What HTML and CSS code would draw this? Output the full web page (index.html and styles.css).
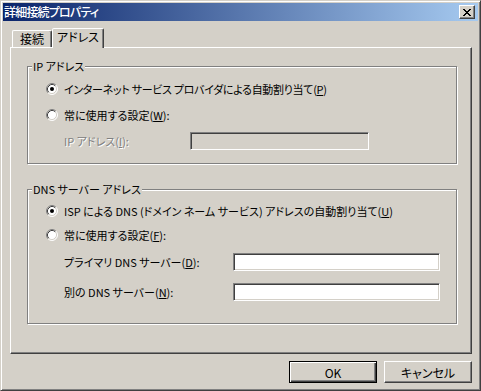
FILE: index.html
```html
<!DOCTYPE html>
<html lang="ja">
<head>
    <meta charset="UTF-8">
    <title>詳細接続プロパティ</title>
    <link rel="stylesheet" href="styles.css">
</head>
<body>
    <div class="window">
        <!-- Title bar -->
        <div class="titlebar">
            <span class="title">詳細接続プロパティ</span>
            <span class="close">
                <svg width="8" height="7" viewBox="0 0 8 7"><path d="M0 0h2v1H0zM6 0h2v1H6zM1 1h2v1H1zM5 1h2v1H5zM2 2h4v1H2zM3 3h2v1H3zM2 4h4v1H2zM1 5h2v1H1zM5 5h2v1H5zM0 6h2v1H0zM6 6h2v1H6z" fill="#000"/></svg>
            </span>
        </div>

        <!-- Tabs -->
        <div class="tabs">
            <div class="tab">接続</div>
            <div class="tab active">アドレス</div>
        </div>

        <div class="panel">
            <!-- IP address group -->
            <div class="group ip">
                <span class="legend">IP アドレス</span>
                <div class="row">
                    <svg class="radio" width="12" height="12" viewBox="0 0 12 12">
                        <circle cx="6" cy="6" r="5" fill="#fff"/>
                        <path d="M2.11 9.89A5.5 5.5 0 0 1 9.89 2.11" stroke="#808080" fill="none"/>
                        <path d="M9.89 2.11A5.5 5.5 0 0 1 2.11 9.89" stroke="#fff" fill="none"/>
                        <path d="M2.82 9.18A4.5 4.5 0 0 1 9.18 2.82" stroke="#404040" fill="none"/>
                        <path d="M9.18 2.82A4.5 4.5 0 0 1 2.82 9.18" stroke="#d4d0c8" fill="none"/>
                        <circle cx="6" cy="6" r="2" fill="#000"/>
                    </svg>
                    <span class="tight">インターネット サービス プロバイダによる自動割り当て(<u>P</u>)</span>
                </div>
                <div class="row">
                    <svg class="radio" width="12" height="12" viewBox="0 0 12 12">
                        <circle cx="6" cy="6" r="5" fill="#fff"/>
                        <path d="M2.11 9.89A5.5 5.5 0 0 1 9.89 2.11" stroke="#808080" fill="none"/>
                        <path d="M9.89 2.11A5.5 5.5 0 0 1 2.11 9.89" stroke="#fff" fill="none"/>
                        <path d="M2.82 9.18A4.5 4.5 0 0 1 9.18 2.82" stroke="#404040" fill="none"/>
                        <path d="M9.18 2.82A4.5 4.5 0 0 1 2.82 9.18" stroke="#d4d0c8" fill="none"/>
                    </svg>
                    <span>常に使用する設定(<u>W</u>):</span>
                </div>
                <div class="row field ip-field">
                    <span class="label disabled">IP アドレス(<u>I</u>):</span>
                    <span class="input off"></span>
                </div>
            </div>

            <!-- DNS group -->
            <div class="group dns">
                <span class="legend">DNS サーバー アドレス</span>
                <div class="row">
                    <svg class="radio" width="12" height="12" viewBox="0 0 12 12">
                        <circle cx="6" cy="6" r="5" fill="#fff"/>
                        <path d="M2.11 9.89A5.5 5.5 0 0 1 9.89 2.11" stroke="#808080" fill="none"/>
                        <path d="M9.89 2.11A5.5 5.5 0 0 1 2.11 9.89" stroke="#fff" fill="none"/>
                        <path d="M2.82 9.18A4.5 4.5 0 0 1 9.18 2.82" stroke="#404040" fill="none"/>
                        <path d="M9.18 2.82A4.5 4.5 0 0 1 2.82 9.18" stroke="#d4d0c8" fill="none"/>
                        <circle cx="6" cy="6" r="2" fill="#000"/>
                    </svg>
                    <span>ISP による DNS (ドメイン ネーム サービス) アドレスの自動割り当て(<u>U</u>)</span>
                </div>
                <div class="row">
                    <svg class="radio" width="12" height="12" viewBox="0 0 12 12">
                        <circle cx="6" cy="6" r="5" fill="#fff"/>
                        <path d="M2.11 9.89A5.5 5.5 0 0 1 9.89 2.11" stroke="#808080" fill="none"/>
                        <path d="M9.89 2.11A5.5 5.5 0 0 1 2.11 9.89" stroke="#fff" fill="none"/>
                        <path d="M2.82 9.18A4.5 4.5 0 0 1 9.18 2.82" stroke="#404040" fill="none"/>
                        <path d="M9.18 2.82A4.5 4.5 0 0 1 2.82 9.18" stroke="#d4d0c8" fill="none"/>
                    </svg>
                    <span>常に使用する設定(<u>F</u>):</span>
                </div>
                <div class="row field dns-field first">
                    <span class="label">プライマリ DNS サーバー(<u>D</u>):</span>
                    <span class="input"></span>
                </div>
                <div class="row field dns-field second">
                    <span class="label">別の DNS サーバー(<u>N</u>):</span>
                    <span class="input"></span>
                </div>
            </div>
        </div>

        <!-- Dialog buttons -->
        <div class="buttons">
            <button class="btn default">OK</button>
            <button class="btn">キャンセル</button>
        </div>
    </div>
</body>
</html>
```

FILE: styles.css
```css
/* Win2000 style dialog */
* {
    box-sizing: border-box;
}

body {
    margin: 0;
    background-color: #d4d0c8;
    font-family: "Noto Sans CJK JP", sans-serif;
    font-size: 11px;
    font-feature-settings: "palt";
    color: #000;
}

.window {
    width: 481px;
    height: 391px;
    display: flex;
    flex-direction: column;
    padding: 2px;
    border: 1px solid;
    border-color: #d4d0c8 #404040 #404040 #d4d0c8;
    box-shadow: inset 1px 1px 0 #fff, inset -1px -1px 0 #808080;
}

/* Title bar */
.titlebar {
    height: 18px;
    display: flex;
    align-items: center;
    justify-content: space-between;
    padding: 0 3px 0 1px;
    background: linear-gradient(to right, #0a246a, #a6caf0);
    color: white;
    line-height: 18px;
}

.title {
    font-size: 12px;
    font-weight: 500;
    letter-spacing: -0.8px;
}

.close {
    width: 16px;
    height: 14px;
    display: flex;
    align-items: center;
    justify-content: center;
    background-color: #d4d0c8;
    border: 1px solid;
    border-color: #fff #404040 #404040 #fff;
    box-shadow: inset -1px -1px 0 #808080;
}

/* Tabs */
.tabs {
    height: 19px;
    margin-top: 7px;
    padding-left: 9px;
    display: flex;
    align-items: flex-end;
}

.tab {
    width: 40px;
    height: 17px;
    font-size: 12px;
    text-align: center;
    line-height: 15px;
    border: 1px solid;
    border-bottom: none;
    border-color: #fff #404040 transparent #fff;
    border-radius: 2px 2px 0 0;
    box-shadow: inset -1px 0 0 #808080;
}

.tab.active {
    width: 52px;
    height: 20px;
    margin-bottom: -1px;
    position: relative;
    background-color: #d4d0c8;
    line-height: 16px;
}

/* Tab page */
.panel {
    height: 307px;
    margin: 0 6px 0 7px;
    padding: 18px 0 0 16px;
    border: 1px solid;
    border-color: #fff #404040 #404040 #fff;
    box-shadow: inset -1px -1px 0 #808080;
}

.group {
    position: relative;
    width: 430px;
    padding-top: 9px;
    border: 1px solid #808080;
    box-shadow: inset 1px 1px 0 #fff, 1px 1px 0 #fff;
}

.group.ip {
    height: 98px;
}

.group.dns {
    height: 135px;
    margin-top: 25px;
}

.legend {
    position: absolute;
    top: -8px;
    left: 4px;
    padding: 0 1px;
    line-height: 14px;
    background-color: #d4d0c8;
}

.row {
    height: 26px;
    display: flex;
    align-items: center;
    padding-left: 18px;
    white-space: nowrap;
}

.dns .row {
    height: 24px;
}

.radio {
    flex: none;
    margin-right: 6px;
}

.tight {
    letter-spacing: -0.3px;
}

.row.field {
    padding-left: 36px;
}

.ip-field {
    padding-left: 37px;
}

.ip-field .label {
    width: 126px;
}

.dns-field .label {
    width: 169px;
}

.dns .row.first {
    margin-top: 3px;
}

.dns .row.second {
    margin-top: 6px;
}

.disabled {
    color: #808080;
    text-shadow: 1px 1px 0 #fff;
}

.input {
    width: 207px;
    height: 18px;
    background-color: #fff;
    border: 1px solid;
    border-color: #808080 #fff #fff #808080;
    box-shadow: inset 1px 1px 0 #404040, inset -1px -1px 0 #d4d0c8;
}

.input.off {
    width: 179px;
    background-color: #d4d0c8;
}

/* Buttons */
.buttons {
    display: flex;
    justify-content: flex-end;
    gap: 7px;
    margin: 7px 6px 0 0;
}

.btn {
    width: 88px;
    height: 22px;
    padding: 0;
    font: inherit;
    font-size: 12px;
    color: #000;
    background-color: #d4d0c8;
    border: 1px solid;
    border-color: #fff #404040 #404040 #fff;
    box-shadow: inset -1px -1px 0 #808080;
}

.btn.default {
    border-color: #000;
    box-shadow: inset 1px 1px 0 #fff, inset -1px -1px 0 #404040, inset -2px -2px 0 #808080;
}
```
